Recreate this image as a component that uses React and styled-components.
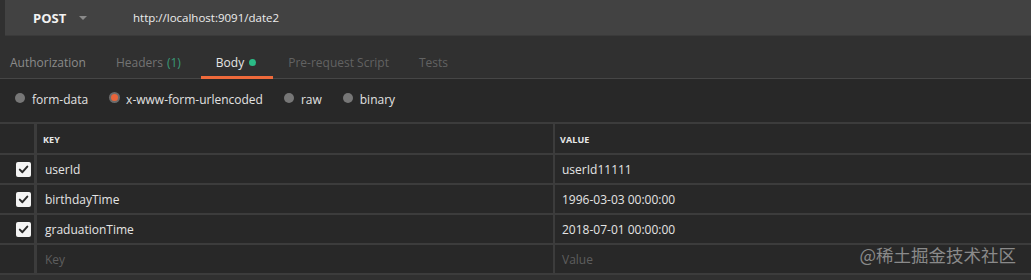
import React from "react";
import styled, { createGlobalStyle } from "styled-components";

const Global = createGlobalStyle`
  html, body { margin: 0; padding: 0; background: #303030; }
  body { font-family: "Open Sans", "Noto Sans", sans-serif; -webkit-font-smoothing: antialiased; }
  * { box-sizing: border-box; }
`;

const Page = styled.div`
  position: relative;
  width: 1031px;
  height: 280px;
  overflow: hidden;
  background: #303030;
`;

const UrlBar = styled.div`
  height: 36px;
  margin-left: 5px;
  background: #424242;
  border-bottom: 1px solid #3a3a3a;
  display: flex;
  align-items: center;
  padding-left: 28px;
`;

const Method = styled.div`
  display: flex;
  align-items: center;
  width: 100px;
  color: #f2f2f2;
  font-weight: 700;
  font-size: 13px;
  gap: 13px;
`;

const Caret = styled.span`
  width: 0;
  height: 0;
  border-left: 4px solid transparent;
  border-right: 4px solid transparent;
  border-top: 4px solid #8a8a8a;
  margin-top: 1px;
`;

const Url = styled.div`
  color: #ececec;
  font-size: 11.5px;
`;

const Tabs = styled.div`
  height: 43px;
  display: flex;
  align-items: stretch;
  border-bottom: 1px solid #464646;
  background: #303030;
`;

const Tab = styled.div`
  position: relative;
  display: flex;
  align-items: center;
  padding: 10px 15px 0;
  font-size: 12px;
  color: ${(p) => p.$color || "#6a6a6a"};
  &:first-child { padding-left: 10px; }
  ${(p) =>
    p.$active &&
    `
    margin-left: 5px;
    padding-right: 17px;
    &::after {
      content: "";
      position: absolute;
      left: 0; right: 0; bottom: -1px;
      height: 3px;
      background: #ef6a3b;
    }
  `}
`;

const Count = styled.span`
  color: #3a9a78;
  margin-left: 4px;
`;

const Dot = styled.span`
  width: 7px;
  height: 7px;
  border-radius: 50%;
  background: #2bbb86;
  margin-left: 5px;
  margin-top: 1px;
`;

const Modes = styled.div`
  height: 43px;
  background: #282828;
  display: flex;
  align-items: center;
  padding-left: 15px;
  padding-bottom: 3px;
`;

const Mode = styled.label`
  display: flex;
  align-items: center;
  margin-right: 21px;
  font-size: 12px;
  color: #e2e2e2;
  gap: 7px;
`;

const Radio = styled.span`
  width: 10px;
  height: 10px;
  border-radius: 50%;
  background: ${(p) => (p.$on ? "#e8643a" : "#777")};
  box-shadow: ${(p) => (p.$on ? "0 0 0 2px #6b6b6b" : "none")};
  margin-top: -3px;
  ${(p) => p.$on && "width: 7px; height: 7px; margin-left: 2px; margin-right: 1px;"}
`;

const Table = styled.div`
  background: #282828;
  border-top: 2px solid #3c3c3c;
`;

const Row = styled.div`
  display: flex;
  height: ${(p) => (p.$head ? 31 : 30)}px;
  border-bottom: 2px solid #3c3c3c;
`;

const CheckCell = styled.div`
  width: 34px;
  display: flex;
  align-items: center;
  justify-content: flex-end;
  padding-right: 3px;
`;

const Cell = styled.div`
  display: flex;
  align-items: center;
  border-left: ${(p) => (p.$wide ? 3 : 2)}px solid #3c3c3c;
  width: ${(p) => (p.$w ? p.$w + "px" : "auto")};
  flex: ${(p) => (p.$w ? "none" : 1)};
  padding-left: ${(p) => p.$pad}px;
  font-size: 12px;
  color: ${(p) => (p.$ph ? "#5e5e5e" : "#e4e4e4")};
`;

const HeadText = styled.span`
  font-size: 9px;
  font-weight: 700;
  color: #e8e8e8;
  letter-spacing: 0.1px;
  margin-top: 2px;
`;

const Box = styled.span`
  width: 15px;
  height: 15px;
  border-radius: 2px;
  background: #f4f4f4;
  display: flex;
  align-items: center;
  justify-content: center;
`;

const Watermark = styled.div`
  position: absolute;
  right: 15px;
  top: 242px;
  font-family: "Noto Sans CJK SC", "Noto Sans", sans-serif;
  font-size: 17.5px;
  color: #8a8a8a;
`;

const Check = () => (
  <Box>
    <svg width="11" height="11" viewBox="0 0 11 11">
      <path d="M1.8 5.6 L4.4 8.2 L9.3 2.6" fill="none" stroke="#2a2a2a" strokeWidth="2" strokeLinecap="round" strokeLinejoin="round" />
    </svg>
  </Box>
);

const rows = [
  ["userId", "userId11111"],
  ["birthdayTime", "1996-03-03 00:00:00"],
  ["graduationTime", "2018-07-01 00:00:00"],
];

export default function App() {
  return (
    <Page>
      <Global />
      <UrlBar>
        <Method>
          POST <Caret />
        </Method>
        <Url>http://localhost:9091/date2</Url>
      </UrlBar>
      <Tabs>
        <Tab $color="#8b8b8b">Authorization</Tab>
        <Tab $color="#737373">
          Headers<Count>(1)</Count>
        </Tab>
        <Tab $active $color="#e6e6e6">
          Body<Dot />
        </Tab>
        <Tab $color="#626262">Pre-request Script</Tab>
        <Tab $color="#626262">Tests</Tab>
      </Tabs>
      <Modes>
        <Mode><Radio />form-data</Mode>
        <Mode><Radio $on />x-www-form-urlencoded</Mode>
        <Mode><Radio />raw</Mode>
        <Mode><Radio />binary</Mode>
      </Modes>
      <Table>
        <Row $head>
          <CheckCell />
          <Cell $wide $w={519} $pad={6}><HeadText>KEY</HeadText></Cell>
          <Cell $pad={5}><HeadText>VALUE</HeadText></Cell>
        </Row>
        {rows.map(([k, v]) => (
          <Row key={k}>
            <CheckCell><Check /></CheckCell>
            <Cell $wide $w={519} $pad={8}>{k}</Cell>
            <Cell $pad={7}>{v}</Cell>
          </Row>
        ))}
        <Row>
          <CheckCell />
          <Cell $wide $w={519} $pad={8} $ph>Key</Cell>
          <Cell $pad={7} $ph>Value</Cell>
        </Row>
      </Table>
      <Watermark>@稀土掘金技术社区</Watermark>
    </Page>
  );
}
